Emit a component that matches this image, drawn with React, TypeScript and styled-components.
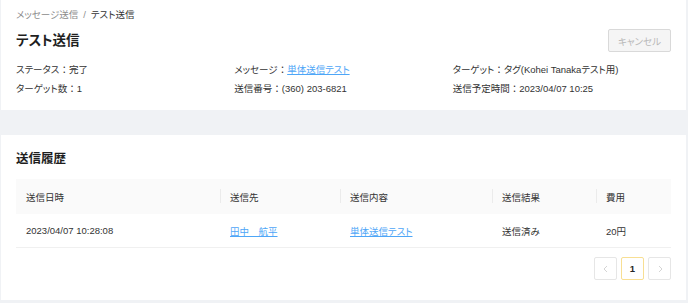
import React from "react";
import styled, { createGlobalStyle } from "styled-components";

const GlobalStyle = createGlobalStyle`
  html, body { margin: 0; padding: 0; background: #f0f2f5; }
  body {
    font-family: "Liberation Sans", "Noto Sans CJK JP", sans-serif;
    font-feature-settings: "palt";
    color: #333;
    font-size: 9.5px;
  }
  * { box-sizing: border-box; }
`;

const Page = styled.div`
  display: flex;
  flex-direction: column;
  gap: 25px;
  padding: 0 2px 3px 1px;
  background: #f0f2f5;
`;

const Card = styled.section<{ $h: number; $pt: number }>`
  background: #fff;
  height: ${(p) => p.$h}px;
  padding: ${(p) => p.$pt}px 15px 0 15px;
  display: flex;
  flex-direction: column;
`;

const Breadcrumb = styled.div`
  display: flex;
  align-items: center;
  gap: 5px;
  line-height: 14px;
  font-size: 9.5px;
`;

const Crumb = styled.span<{ $current?: boolean }>`
  color: ${(p) => (p.$current ? "#333" : "#8c8c8c")};
`;

const TitleRow = styled.div`
  display: flex;
  align-items: center;
  justify-content: space-between;
  height: 23px;
  margin-top: 7px;
`;

const Title = styled.h1<{ $size: number }>`
  margin: 0;
  font-size: ${(p) => p.$size}px;
  font-weight: 700;
  color: #1f1f1f;
  line-height: 20px;
`;

const CancelButton = styled.button`
  width: 63px;
  height: 23px;
  border: 1px solid #d9d9d9;
  border-radius: 2px;
  background: #f5f5f5;
  color: #b8b8b8;
  font-family: inherit;
  font-feature-settings: "palt";
  font-size: 9.5px;
  padding: 0;
  cursor: not-allowed;
`;

const InfoGrid = styled.div`
  display: grid;
  grid-template-columns: 1fr 1fr 1fr;
  margin-top: 7.5px;
  line-height: 19.5px;
`;

const InfoItem = styled.div`
  color: #333;
  white-space: nowrap;
`;

const Colon = styled.span`
  font-feature-settings: normal;
`;

const Link = styled.a`
  color: #4ea6f7;
  text-decoration: underline;
  cursor: pointer;
`;

const Table = styled.div`
  margin-top: 10px;
  display: grid;
  grid-template-columns: 204px 120px 152px 104px 1fr;
`;

const HeadCell = styled.div<{ $sep?: boolean }>`
  position: relative;
  height: 35px;
  display: flex;
  align-items: center;
  padding-left: 10px;
  background: #fafafa;
  color: #333;
  &::before {
    content: "";
    display: ${(p) => (p.$sep ? "block" : "none")};
    position: absolute;
    left: 0;
    top: 10px;
    width: 1px;
    height: 14px;
    background: #ebebeb;
  }
`;

const BodyCell = styled.div`
  height: 34px;
  display: flex;
  align-items: center;
  padding-left: 10px;
  border-bottom: 1px solid #f0f0f0;
  color: #333;
`;

const Pagination = styled.div`
  display: flex;
  justify-content: flex-end;
  gap: 4px;
  margin-top: 9px;
`;

const PageButton = styled.button<{ $active?: boolean }>`
  width: 23px;
  height: 23px;
  padding: 0;
  display: flex;
  align-items: center;
  justify-content: center;
  border: 1px solid ${(p) => (p.$active ? "#f8df93" : "#e6e6e6")};
  border-radius: 2px;
  background: #fff;
  color: #262626;
  font-family: inherit;
  font-size: 9.5px;
  font-weight: ${(p) => (p.$active ? 700 : 400)};
`;

const Chevron = ({ dir }: { dir: "left" | "right" }) => (
  <svg width="8" height="8" viewBox="0 0 8 8">
    <polyline
      points={dir === "left" ? "5,1 2,4 5,7" : "3,1 6,4 3,7"}
      fill="none"
      stroke="#cfcfcf"
      strokeWidth="0.9"
    />
  </svg>
);

const Field = ({ label, children }: { label: string; children: React.ReactNode }) => (
  <InfoItem>
    {label}
    <Colon>：</Colon>
    {children}
  </InfoItem>
);

const headers = ["送信日時", "送信先", "送信内容", "送信結果", "費用"];

export default function App() {
  return (
    <>
      <GlobalStyle />
      <Page>
        <Card $h={110} $pt={8}>
          <Breadcrumb>
            <Crumb>メッセージ送信</Crumb>
            <Crumb>/</Crumb>
            <Crumb $current>テスト送信</Crumb>
          </Breadcrumb>
          <TitleRow>
            <Title $size={13.5}>テスト送信</Title>
            <CancelButton disabled>キャンセル</CancelButton>
          </TitleRow>
          <InfoGrid>
            <Field label="ステータス">完了</Field>
            <Field label="メッセージ">
              <Link>単体送信テスト</Link>
            </Field>
            <Field label="ターゲット">タグ(Kohei Tanakaテスト用)</Field>
            <Field label="ターゲット数">1</Field>
            <Field label="送信番号">(360) 203-6821</Field>
            <Field label="送信予定時間">2023/04/07 10:25</Field>
          </InfoGrid>
        </Card>
        <Card $h={165} $pt={14}>
          <Title $size={12.5}>送信履歴</Title>
          <Table>
            {headers.map((h, i) => (
              <HeadCell key={h} $sep={i > 0}>
                {h}
              </HeadCell>
            ))}
            <BodyCell>2023/04/07 10:28:08</BodyCell>
            <BodyCell>
              <Link>田中　航平</Link>
            </BodyCell>
            <BodyCell>
              <Link>単体送信テスト</Link>
            </BodyCell>
            <BodyCell>送信済み</BodyCell>
            <BodyCell>20円</BodyCell>
          </Table>
          <Pagination>
            <PageButton aria-label="前のページ">
              <Chevron dir="left" />
            </PageButton>
            <PageButton $active>1</PageButton>
            <PageButton aria-label="次のページ">
              <Chevron dir="right" />
            </PageButton>
          </Pagination>
        </Card>
      </Page>
    </>
  );
}
